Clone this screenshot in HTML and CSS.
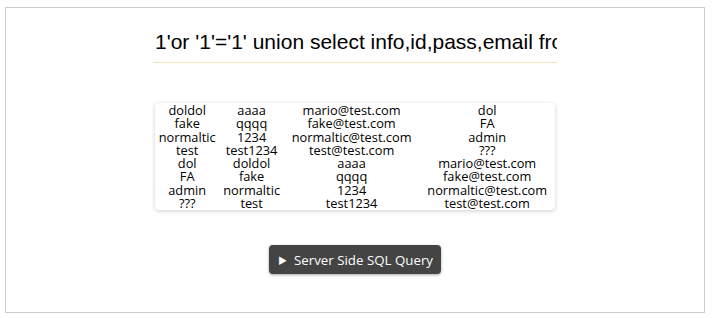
FILE: index.html
```html
<!DOCTYPE html>
<html lang="en">
	<head>
		<meta name="viewport" content="width=device-width, initial-scale=1" />
		<title>SQL Injection Demo</title>
		<link rel="stylesheet" href="styles.css">
	</head>
	<body>
		<div class="panel">
			<input class="query" type="text" value="1'or '1'='1' union select info,id,pass,email from users" />
			<div class="result">
				<table>
					<tr><td>doldol</td><td>aaaa</td><td>mario@test.com</td><td>dol</td></tr>
					<tr><td>fake</td><td>qqqq</td><td>fake@test.com</td><td>FA</td></tr>
					<tr><td>normaltic</td><td>1234</td><td>normaltic@test.com</td><td>admin</td></tr>
					<tr><td>test</td><td>test1234</td><td>test@test.com</td><td>???</td></tr>
					<tr><td>dol</td><td>doldol</td><td>aaaa</td><td>mario@test.com</td></tr>
					<tr><td>FA</td><td>fake</td><td>qqqq</td><td>fake@test.com</td></tr>
					<tr><td>admin</td><td>normaltic</td><td>1234</td><td>normaltic@test.com</td></tr>
					<tr><td>???</td><td>test</td><td>test1234</td><td>test@test.com</td></tr>
				</table>
			</div>
			<button class="btn" type="button"><span class="arrow">&#9654;</span>Server Side SQL Query</button>
		</div>
	</body>
</html>
```

FILE: styles.css
```css
body {
	margin: 0;
	background-color: #fff;
	color: #000;
	font-family: "Open Sans", "Noto Sans CJK KR", sans-serif;
}
.panel {
	box-sizing: border-box;
	width: 700px;
	height: 306px;
	margin: 7px 0 0 5px;
	border: 1px solid #ccc;
	padding-top: 18px;
	display: flex;
	flex-direction: column;
	align-items: center;
}
.query {
	box-sizing: border-box;
	width: 404px;
	height: 37px;
	padding: 0 0 5px 2px;
	border: none;
	border-bottom: 1px solid #efe2bd;
	outline: none;
	font: 21px "Liberation Sans", Arial, sans-serif;
	color: #000;
	background: transparent;
}
.result {
	width: 400px;
	margin-top: 40px;
	padding: 1px 0 0;
	background-color: #fff;
	border-radius: 4px;
	box-shadow: 0 1px 4px rgba(0, 0, 0, 0.2);
}
.result table {
	width: 100%;
	border-collapse: collapse;
	font-size: 12.8px;
	line-height: 13.3px;
}
.result td {
	padding: 0;
	text-align: center;
}
.btn {
	margin-top: 35px;
	height: 29px;
	padding: 0 8px 0 9px;
	background-color: #444;
	color: #fff;
	border: none;
	border-radius: 4px;
	box-shadow: 0 1px 3px rgba(0, 0, 0, 0.35);
	font-family: "Open Sans", "Noto Sans CJK KR", sans-serif;
	font-size: 13.3px;
	cursor: pointer;
}
.arrow {
	font-size: 9px;
	margin-right: 7px;
	vertical-align: 1px;
}
```
